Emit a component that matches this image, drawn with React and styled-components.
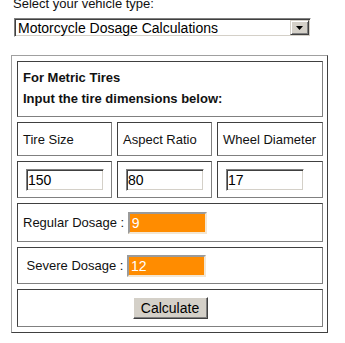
import styled, { createGlobalStyle } from 'styled-components'

const GlobalStyle = createGlobalStyle`
  body {
    margin: 0;
    background: #ffffff;
    font-family: "Liberation Sans", Arial, sans-serif;
    color: #000000;
  }
  * {
    box-sizing: border-box;
  }
`;

export default function App() {
  return (
    <Page>
      <GlobalStyle />
      <TopLabel>Select your vehicle type:</TopLabel>
      <SelectBox>
        <SelectValue>Motorcycle Dosage Calculations</SelectValue>
        <SelectArrow>
          <svg width="7" height="4" viewBox="0 0 7 4">
            <path d="M0 0h7L3.5 4z" fill="#000" />
          </svg>
        </SelectArrow>
      </SelectBox>

      <Panel>
        <HeaderCell $h={56}>
          <HeadLine>For Metric Tires</HeadLine>
          <HeadLine>Input the tire dimensions below:</HeadLine>
        </HeaderCell>

        <Cell $h={34}>Tire Size</Cell>
        <Cell $h={34}>Aspect Ratio</Cell>
        <Cell $h={34}>Wheel Diameter</Cell>

        <Cell $h={37} $pad={8}><TextInput readOnly value="150" /></Cell>
        <Cell $h={37} $pad={8}><TextInput readOnly value="80" /></Cell>
        <Cell $h={37} $pad={8}><TextInput readOnly value="17" /></Cell>

        <WideCell $h={39}>
          Regular Dosage :&nbsp;<ResultInput readOnly value="9" />
        </WideCell>
        <WideCell $h={37}>
          &nbsp;Severe Dosage :&nbsp;<ResultInput readOnly value="12" />
        </WideCell>
        <WideCell $h={38} $center>
          <CalcButton type="button">Calculate</CalcButton>
        </WideCell>
      </Panel>
    </Page>
  );
}

const Page = styled.div`
  margin-top: -4px;
  padding-left: 11px;
  width: 345px;
`;

const TopLabel = styled.div`
  padding-left: 2px;
  font-size: 13px;
  line-height: 15px;
  color: #111;
`;

const SelectBox = styled.div`
  display: flex;
  align-items: stretch;
  margin: 7px 0 0 3px;
  width: 297px;
  height: 19px;
  background: #fff;
  border: 1px solid;
  border-color: #808080 #ffffff #ffffff #808080;
  box-shadow: inset 1px 1px 0 #404040, inset -1px -1px 0 #d4d0c8;
  padding: 1px;
`;

const SelectValue = styled.div`
  flex: 1;
  padding-left: 2px;
  font-size: 14px;
  line-height: 16px;
  color: #000;
`;

const SelectArrow = styled.div`
  width: 19px;
  display: flex;
  align-items: center;
  justify-content: center;
  background: #d4d0c8;
  border: 1px solid;
  border-color: #d4d0c8 #404040 #404040 #d4d0c8;
  box-shadow: inset 1px 1px 0 #ffffff, inset -1px -1px 0 #808080;
`;

const Panel = styled.div`
  margin-top: 18px;
  width: 317px;
  display: grid;
  grid-template-columns: 95px 95px 106px;
  gap: 5px;
  padding: 5px;
  border: 1px solid;
  border-color: #a0a0a0 #404040 #404040 #a0a0a0;
`;

const Cell = styled.div`
  height: ${p => p.$h}px;
  display: flex;
  align-items: center;
  justify-content: ${p => (p.$center ? 'center' : 'flex-start')};
  padding-left: ${p => p.$pad ?? 5}px;
  border: 1px solid;
  border-color: #404040 #808080 #808080 #404040;
  font-size: 13px;
  color: #111;
  white-space: nowrap;
`;

const WideCell = styled(Cell)`
  grid-column: 1 / -1;
  padding-left: ${p => (p.$center ? 0 : 5)}px;
`;

const HeaderCell = styled(Cell)`
  grid-column: 1 / -1;
  flex-direction: column;
  align-items: flex-start;
  justify-content: flex-start;
  padding-top: 5px;
`;

const HeadLine = styled.div`
  font-size: 13px;
  font-weight: bold;
  line-height: 21px;
  color: #111;
`;

const TextInput = styled.input`
  width: 78px;
  height: 22px;
  padding: 0 1px;
  font-family: "Liberation Sans", Arial, sans-serif;
  font-size: 14px;
  color: #000;
  background: #fff;
  border: 1px solid;
  border-color: #808080 #ffffff #ffffff #808080;
  box-shadow: inset 1px 1px 0 #404040, inset -1px -1px 0 #d4d0c8;
  outline: none;
`;

const ResultInput = styled.input`
  width: 79px;
  height: 22px;
  padding: 0 2px;
  font-family: "Liberation Sans", Arial, sans-serif;
  font-size: 14px;
  color: #ffffff;
  background: #ff8c00;
  border: 2px solid;
  border-color: #9a9a9a #f3e6d2 #f3e6d2 #9a9a9a;
  outline: none;
`;

const CalcButton = styled.button`
  width: 75px;
  height: 22px;
  padding: 0;
  font-family: "Liberation Sans", Arial, sans-serif;
  font-size: 14px;
  color: #000;
  background: #d4d0c8;
  border: 1px solid;
  border-color: #ffffff #404040 #404040 #ffffff;
  box-shadow: inset -1px -1px 0 #808080;
`;
